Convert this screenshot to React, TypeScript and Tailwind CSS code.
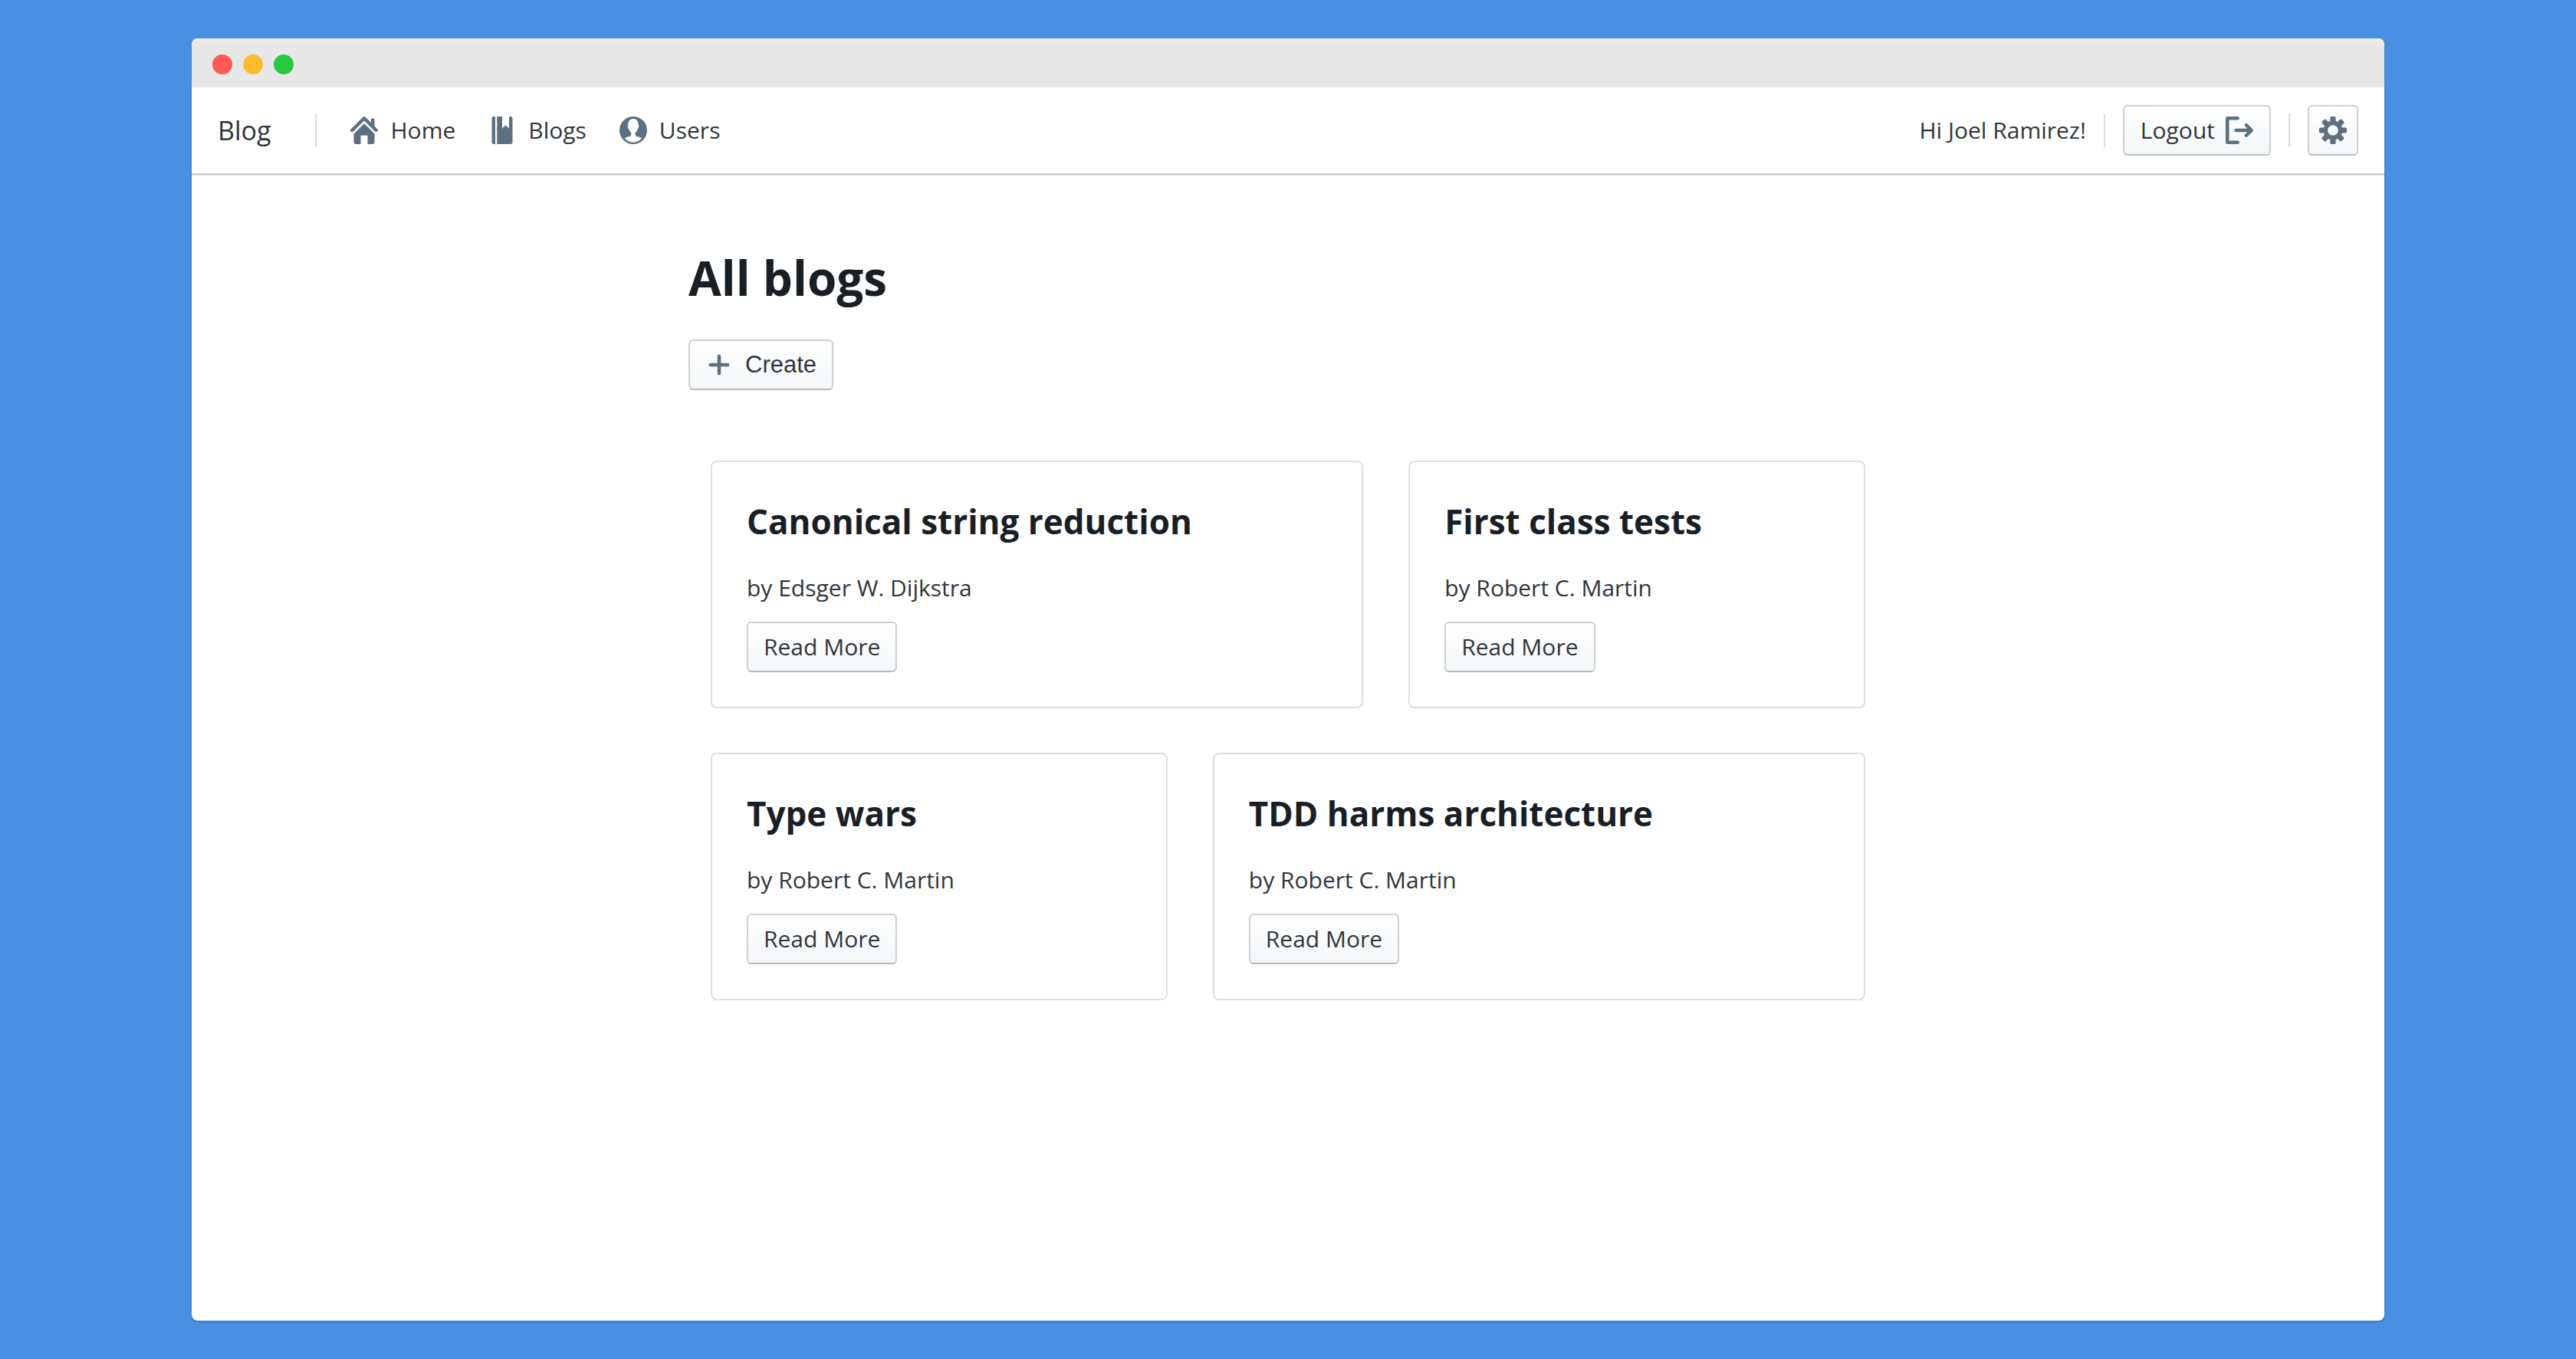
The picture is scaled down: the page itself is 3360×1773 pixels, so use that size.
import type { ReactNode } from "react";

const ICONS = {
  home: "M2 10v5c0 .55.45 1 1 1h3v-5h4v5h3c.55 0 1-.45 1-1v-5L8 4l-6 6zm13.71-2.71L14 5.59V2c0-.55-.45-1-1-1s-1 .45-1 1v1.59L8.71.29C8.53.11 8.28 0 8 0s-.53.11-.71.29l-7 7a1.003 1.003 0 001.42 1.42L8 2.41l6.29 6.29c.18.19.43.3.71.3a1.003 1.003 0 00.71-1.71z",
  book: "M2 1v14c0 .55.45 1 1 1h1V0H3c-.55 0-1 .45-1 1zm11-1h-1v7l-2-2-2 2V0H5v16h8c.55 0 1-.45 1-1V1c0-.55-.45-1-1-1z",
  user: "M8 0a8 8 0 100 16A8 8 0 008 0zm0 15c-2.1 0-3.700-.95-4.900-2.400.5-.65 3.100-.95 3.550-1.600.2-.4.15-1.200.1-1.650C6 8.800 5.600 7.900 5.450 7.100c-.35-.2-.6-.7-.65-1.200-.03-.35.05-.7.25-.9C4.900 2.800 6 1.300 8 1.300s3.100 1.500 2.950 3.700c.2.2.28.550.25.900-.05.5-.3 1-.65 1.200-.15.8-.55 1.700-1.300 2.250-.05.450-.1 1.250.1 1.650.450.650 3.050.950 3.550 1.600C11.700 14.050 10.100 15 8 15z",
  logout: "M7 14H2V2h5c.55 0 1-.45 1-1s-.45-1-1-1H1C.45 0 0 .45 0 1v14c0 .55.45 1 1 1h6c.55 0 1-.45 1-1s-.45-1-1-1zm8.71-6.71l-3-3a1.003 1.003 0 00-1.42 1.42L12.59 7H6c-.55 0-1 .45-1 1s.45 1 1 1h6.59l-1.29 1.29c-.19.18-.3.43-.3.71a1.003 1.003 0 001.71.71l3-3c.18-.18.29-.43.29-.71 0-.28-.11-.53-.29-.71z",
  cog: "M15.19 6.39h-1.85c-.11-.37-.27-.71-.45-1.04l1.36-1.36c.31-.31.31-.82 0-1.13l-1.13-1.13a.803.803 0 00-1.13 0l-1.36 1.36c-.33-.17-.67-.33-1.04-.44V.79c0-.44-.36-.8-.8-.8h-1.6c-.44 0-.8.36-.8.8v1.86c-.39.12-.75.28-1.1.47l-1.3-1.3c-.3-.3-.79-.3-1.09 0L1.82 2.91c-.3.3-.3.79 0 1.09l1.3 1.3c-.2.34-.36.7-.48 1.09H.79c-.44 0-.8.36-.8.8v1.6c0 .44.36.8.8.8h1.85c.11.37.27.71.45 1.04l-1.36 1.36c-.31.31-.31.82 0 1.13l1.13 1.13c.31.31.82.31 1.13 0l1.36-1.36c.33.18.67.33 1.04.44v1.86c0 .44.36.8.8.8h1.6c.44 0 .8-.36.8-.8v-1.86c.39-.12.75-.28 1.1-.47l1.3 1.3c.3.3.79.3 1.09 0l1.09-1.09c.3-.3.3-.79 0-1.09l-1.3-1.3c.19-.35.36-.71.48-1.1h1.85c.44 0 .8-.36.8-.8v-1.6a.816.816 0 00-.81-.79zm-7.2 4.6c-1.66 0-3-1.34-3-3s1.34-3 3-3 3 1.34 3 3-1.34 3-3 3z",
  plus: "M13 7H9V3c0-.55-.45-1-1-1s-1 .45-1 1v4H3c-.55 0-1 .45-1 1s.45 1 1 1h4v4c0 .55.45 1 1 1s1-.45 1-1V9h4c.55 0 1-.45 1-1s-.45-1-1-1z",
};

function Icon({ name }: { name: keyof typeof ICONS }) {
  return (
    <svg viewBox="0 0 16 16" className="size-9 shrink-0 fill-[#5c7080]" fillRule="evenodd" aria-hidden="true">
      <path d={ICONS[name]} />
    </svg>
  );
}

const surface =
  "flex h-[66px] items-center rounded-[6px] border-2 border-[#cdcfd0] border-b-[#b8babc] bg-linear-to-b from-white to-[#f4f7f9] whitespace-nowrap";

function Divider() {
  return <div className="h-11 w-0.5 bg-[#dbdcdd]" />;
}

function NavLink({ icon, children }: { icon: keyof typeof ICONS; children: ReactNode }) {
  return (
    <a href="#" className="flex items-center gap-4">
      <Icon name={icon} />
      {children}
    </a>
  );
}

function BlogCard({ title, author }: { title: string; author: string }) {
  return (
    <article className="flex flex-col items-start rounded-[8px] border-2 border-[#dedfe0] px-[45px] pt-[45px] pb-[45px]">
      <h2 className="text-[44px] leading-[64px] font-bold text-[#182026]">{title}</h2>
      <p className="mt-[35px] leading-[40px]">by {author}</p>
      <a href="#" className={`${surface} mt-[24px] px-[20px]`}>
        Read More
      </a>
    </article>
  );
}

export default function App() {
  return (
    <div className="flex min-h-screen flex-col bg-[#4990e2] px-[250px] py-[50px] font-['Open_Sans',sans-serif] text-[30px] leading-[40px] text-[#30363b]">
      <div className="flex flex-1 flex-col overflow-hidden rounded-[8px] bg-white shadow-[0_1px_3px_rgba(0,0,0,0.25)]">
        <div className="flex h-16 items-center gap-[14px] border-t-4 border-[#ececec] bg-[#e8e8e8] px-[27px]">
          <span className="size-[26px] rounded-full bg-[#ff5b54]" />
          <span className="size-[26px] rounded-full bg-[#fdbb2d]" />
          <span className="size-[26px] rounded-full bg-[#27c93f]" />
        </div>
        <header className="flex h-[114px] items-center justify-between border-b-2 border-[#c6c7c8] px-[34px] shadow-[0_1px_1px_rgba(0,0,0,0.1)]">
          <div className="flex items-center">
            <span className="mr-[58px] text-[34px]">Blog</span>
            <Divider />
            <nav className="ml-[44px] flex items-center gap-[43px]">
              <NavLink icon="home">Home</NavLink>
              <NavLink icon="book">Blogs</NavLink>
              <NavLink icon="user">Users</NavLink>
            </nav>
          </div>
          <div className="flex items-center gap-[23px]">
            <span>Hi Joel Ramirez!</span>
            <Divider />
            <button type="button" className={`${surface} gap-[14px] px-[21px]`}>
              Logout
              <Icon name="logout" />
            </button>
            <Divider />
            <button type="button" aria-label="Settings" className={`${surface} w-[66px] justify-center`}>
              <Icon name="cog" />
            </button>
          </div>
        </header>
        <main className="mx-auto w-full max-w-[1564px] pt-[92px]">
          <h1 className="text-[62px] leading-[84px] font-bold text-[#182026]">All blogs</h1>
          <button
            type="button"
            className={`${surface} mt-[39px] gap-[16px] px-[20px] font-['Liberation_Sans',sans-serif] text-[31px]`}
          >
            <Icon name="plus" />
            Create
          </button>
          <div className="flex flex-col gap-[58px] px-[29px] pt-[92px]">
            <section className="grid grid-cols-[10fr_7fr] gap-[59px]">
              <BlogCard title="Canonical string reduction" author="Edsger W. Dijkstra" />
              <BlogCard title="First class tests" author="Robert C. Martin" />
            </section>
            <section className="grid grid-cols-[7fr_10fr] gap-[59px]">
              <BlogCard title="Type wars" author="Robert C. Martin" />
              <BlogCard title="TDD harms architecture" author="Robert C. Martin" />
            </section>
          </div>
        </main>
      </div>
    </div>
  );
}
